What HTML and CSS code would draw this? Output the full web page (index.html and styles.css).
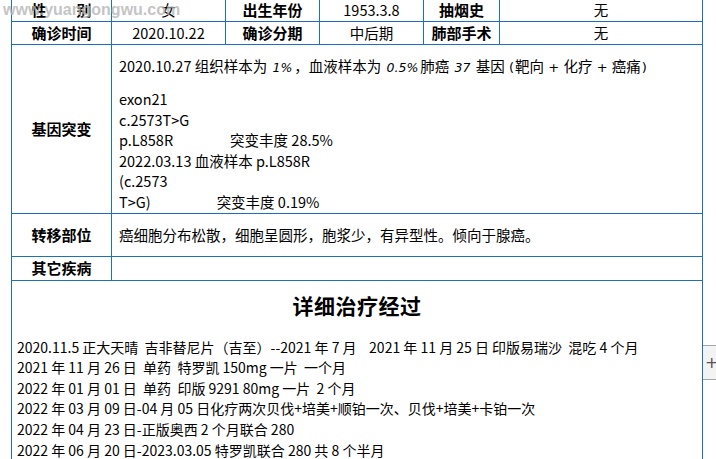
FILE: index.html
```html
<!DOCTYPE html>
<html lang="zh-CN">
<head>
<meta charset="utf-8">
<link rel="stylesheet" href="styles.css">
</head>
<body>
<div class="page">
  <table class="record">
    <colgroup>
      <col class="c1"><col class="c2"><col class="c3"><col class="c4"><col class="c5"><col class="c6">
    </colgroup>
    <tr class="r-short">
      <th>性　　别</th><td class="val">女</td><th>出生年份</th><td class="val">1953.3.8</td><th>抽烟史</th><td class="val">无</td>
    </tr>
    <tr class="r-short">
      <th>确诊时间</th><td class="val">2020.10.22</td><th>确诊分期</th><td class="val">中后期</td><th>肺部手术</th><td class="val">无</td>
    </tr>
    <tr>
      <th>基因突变</th>
      <td colspan="5" class="gene">
        <p class="gene-head">2020.10.27 组织样本为 <i class="alt">1%</i>，血液样本为 <i class="alt">0.5%</i>肺癌 <i class="alt">37</i> 基因 <span class="sym">(</span>靶向 <span class="sym">+</span> 化疗 <span class="sym">+</span> 癌痛<span class="sym">)</span></p>
        <p class="gene-body">exon21<br>c.2573T&gt;G<br>p.L858R<span class="gap1"></span>突变丰度 28.5%<br>2022.03.13 血液样本 p.L858R<br>(c.2573<br>T&gt;G)<span class="gap2"></span>突变丰度 0.19%</p>
      </td>
    </tr>
    <tr class="r-mid">
      <th>转移部位</th><td colspan="5" class="txt">癌细胞分布松散，细胞呈圆形，胞浆少，有异型性。倾向于腺癌。</td>
    </tr>
    <tr class="r-other">
      <th>其它疾病</th><td colspan="5" class="txt"></td>
    </tr>
    <tr>
      <td colspan="6" class="detail">
        <h2 class="title">详细治疗经过</h2>
        <div class="lines">
          <p>2020.11.5 正大天晴&nbsp; 吉非替尼片（吉至）--2021 年 7 月&nbsp;&nbsp;&nbsp; 2021 年 11 月 25 日 印版易瑞沙&nbsp; 混吃 4 个月</p>
          <p>2021 年 11 月 26 日&nbsp; 单药&nbsp; 特罗凯 150mg 一片&nbsp; 一个月</p>
          <p>2022 年 01 月 01 日&nbsp; 单药&nbsp; 印版 9291 80mg 一片&nbsp; 2 个月</p>
          <p>2022 年 03 月 09 日-04 月 05 日化疗两次贝伐+培美+顺铂一次、贝伐+培美+卡铂一次</p>
          <p>2022 年 04 月 23 日-正版奥西 2 个月联合 280</p>
          <p>2022 年 06 月 20 日-2023.03.05 特罗凯联合 280 共 8 个半月</p>
        </div>
      </td>
    </tr>
  </table>
  <div class="watermark">www.yuangongwu.com</div>
  <div class="side-btn">+</div>
</div>
</body>
</html>
```

FILE: styles.css
```css
html, body {
  margin: 0;
  padding: 0;
  background: #fff;
  overflow: hidden;
}
body {
  font-family: "Noto Sans CJK SC", "Noto Sans", sans-serif;
  color: #000;
  font-size: 14px;
}
.page {
  position: relative;
  width: 716px;
  height: 459px;
  overflow: hidden;
}
.record {
  border-collapse: collapse;
  table-layout: fixed;
  width: 691px;
  margin: -2px 0 0 11px;
}
.c1 { width: 100px; }
.c2 { width: 114px; }
.c3 { width: 94px; }
.c4 { width: 104px; }
.c5 { width: 76px; }
.c6 { width: 203px; }
.record th, .record td {
  border: 1px solid #1d6fc0;
  padding: 0;
  vertical-align: middle;
}
.record th {
  font-weight: bold;
  font-size: 15px;
  text-align: center;
  line-height: 20px;
}
.val {
  text-align: center;
  font-size: 14.5px;
  line-height: 20px;
}
.r-short th, .r-short td { height: 22px; }
.r-mid th, .r-mid td { height: 42px; }
.r-other th, .r-other td { height: 23px; }
.gene {
  padding: 10px 0 0 7px !important;
  font-size: 14.5px;
  vertical-align: top !important;
}
.gene p { margin: 0; }
.gene-head {
  line-height: 21px;
  margin-bottom: 11px !important;
  white-space: nowrap;
}
.gene-body {
  line-height: 20.6px;
}
.alt {
  font-family: "DejaVu Sans", sans-serif;
  font-size: 12.5px;
  font-style: italic;
  padding: 0 2px;
}
.sym {
  font-family: "DejaVu Sans", sans-serif;
  font-size: 13px;
  padding: 0 1px;
}
.gap1 { display: inline-block; width: 57px; }
.gap2 { display: inline-block; width: 66px; }
.txt {
  padding-left: 7px !important;
  font-size: 14.5px;
}
.detail {
  border-bottom: none !important;
  vertical-align: top !important;
  padding: 10px 0 0 5px !important;
  height: 190px;
}
.title {
  margin: 0 0 18px -5px;
  text-align: center;
  font-size: 21px;
  line-height: 28px;
  font-weight: bold;
  font-family: "Noto Sans CJK SC", sans-serif;
  letter-spacing: 0.5px;
}
.lines p {
  margin: 0;
  line-height: 20.6px;
  font-size: 14px;
  white-space: nowrap;
}
.watermark {
  position: absolute;
  left: 3px;
  top: 1px;
  font-family: "Liberation Sans", Arial, sans-serif;
  font-weight: bold;
  font-size: 16px;
  color: rgba(180, 180, 180, 0.8);
  pointer-events: none;
}
.side-btn {
  position: absolute;
  left: 703px;
  top: 345px;
  width: 20px;
  height: 35px;
  box-sizing: border-box;
  border-top: 1px solid #a6a6a6;
  border-bottom: 1px solid #a6a6a6;
  background: #f3f3f3;
  color: #555;
  font-family: "DejaVu Sans", sans-serif;
  font-size: 16px;
  line-height: 33px;
  padding-left: 2px;
}
```
